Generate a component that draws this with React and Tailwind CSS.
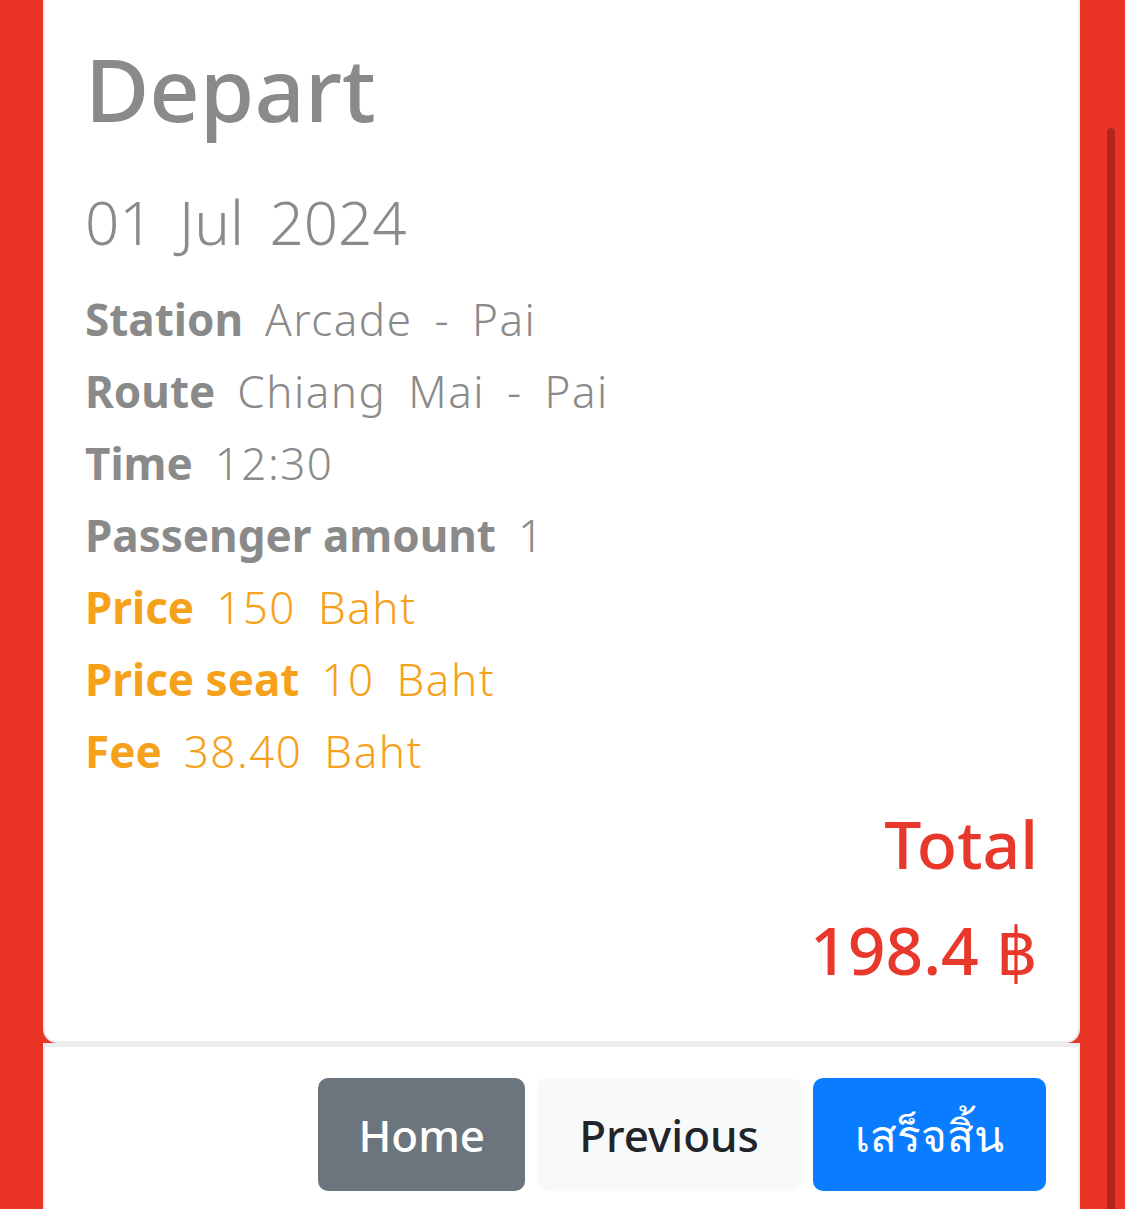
import React from 'react';

const rows = [
  { label: 'Station', value: 'Arcade - Pai', tone: 'gray' },
  { label: 'Route', value: 'Chiang Mai - Pai', tone: 'gray' },
  { label: 'Time', value: '12:30', tone: 'gray' },
  { label: 'Passenger amount', value: '1', tone: 'gray' },
  { label: 'Price', value: '150 Baht', tone: 'orange' },
  { label: 'Price seat', value: '10 Baht', tone: 'orange' },
  { label: 'Fee', value: '38.40 Baht', tone: 'orange' },
];

export default function App() {
  return (
    <div className="relative h-[1209px] w-full overflow-hidden bg-[#ea3526] font-['Noto_Sans','Liberation_Sans',sans-serif]">
      {/* scrollbar */}
      <div className="absolute right-[10px] top-[128px] h-[1200px] w-[8px] rounded-full bg-[#b3261d]" />

      <div className="ml-[43px] mr-[45px] flex flex-col">
        {/* Card body */}
        <div className="rounded-b-[14px] border-x-2 border-b-2 border-[#ececec] bg-white px-[40px] pb-[52px]">
          <h1 className="mt-[44px] text-[88px] font-medium leading-[88px] text-[#8a8a8a]">Depart</h1>
          <p className="mt-[60px] text-[60px] font-light leading-[60px] text-[#8a8a8a] [word-spacing:10px]">01 Jul 2024</p>

          <div className="mt-[31px] flex flex-col">
            {rows.map((r) => (
              <div
                key={r.label}
                className={`flex h-[72px] items-center text-[44px] leading-[72px] ${
                  r.tone === 'orange' ? 'text-[#f6a11a]' : 'text-[#8a8a8a]'
                }`}
              >
                <span className="font-bold">{r.label}</span>
                <span className="ml-[22px] font-light tracking-[1.5px] [word-spacing:9px]">{r.value}</span>
              </div>
            ))}
          </div>

          <div className="mt-[16px] flex flex-col items-end text-[#e8372b]">
            <p className="text-[66px] font-medium leading-[80px]">Total</p>
            <p className="mt-[26px] text-[66px] font-medium leading-[80px]">198.4 ฿</p>
          </div>
        </div>

        {/* Card footer */}
        <div className="flex h-[200px] justify-end gap-[12px] rounded-b-[14px] border-x-2 border-t-4 border-[#ececec] bg-white pr-[32px] pt-[31px]">
          <button className="h-[113px] rounded-[10px] bg-[#6c757d] px-[40px] text-[44px] font-medium text-white">Home</button>
          <button className="h-[113px] rounded-[10px] bg-[#f8f9fa] px-[42px] text-[44px] font-medium text-[#212529]">Previous</button>
          <button className="h-[113px] rounded-[10px] bg-[#0a7cff] px-[42px] text-[44px] font-medium text-white">เสร็จสิ้น</button>
        </div>
      </div>
    </div>
  );
}
